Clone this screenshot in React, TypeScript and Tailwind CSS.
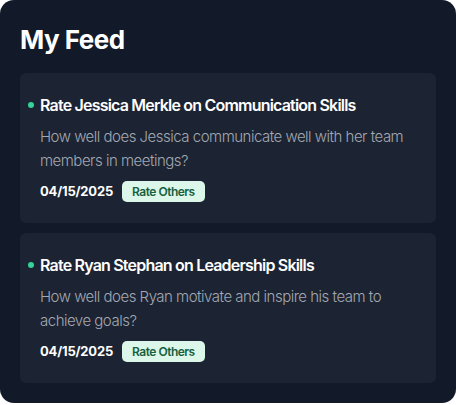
import { FunctionComponent, ReactElement } from "react";

interface FeedItem {
    id: number;
    title: string;
    question: string;
    date: string;
}

const items: FeedItem[] = [
    {
        id: 1,
        title: "Rate Jessica Merkle on Communication Skills",
        question: "How well does Jessica communicate well with her team members in meetings?",
        date: "04/15/2025",
    },
    {
        id: 2,
        title: "Rate Ryan Stephan on Leadership Skills",
        question: "How well does Ryan motivate and inspire his team to achieve goals?",
        date: "04/15/2025",
    },
];

const FeedCard: FunctionComponent<{ item: FeedItem }> = ({ item }): ReactElement => {
    return (
        <div className="bg-[#1c2433] rounded-md pt-5 pb-[21px] pl-5 pr-5">
            {/* Heading */}
            <div className="flex items-center">
                <span className="w-[6px] h-[6px] rounded-full bg-[#34d399] -ml-[12px] mr-[6px] shrink-0" />
                <h3 className="text-[16px] leading-6 font-semibold text-white tracking-[-0.8px]">
                    {item.title}
                </h3>
            </div>

            <p className="mt-2 text-[15px] leading-6 font-light text-[#a3a8b2] tracking-[-0.5px]">
                {item.question}
            </p>

            <div className="mt-2 flex items-center gap-[9px]">
                <span className="text-[13px] font-bold text-white tracking-[-0.2px]">{item.date}</span>
                <span className="h-[21px] px-[10px] flex items-center rounded-[5px] bg-[#dcf7ea] text-[#17603f] text-[12px] font-semibold tracking-[-0.5px]">
                    Rate Others
                </span>
            </div>
        </div>
    );
};

const App: FunctionComponent = (): ReactElement => {
    return (
        <div className="w-[456px] h-[403px] bg-[#121a29] rounded-[14px] pt-6 px-5 pb-5 font-['Inter',sans-serif]">
            <h1 className="text-[26px] leading-8 font-bold text-white mb-[17px] tracking-[-0.5px]">My Feed</h1>

            <div className="flex flex-col gap-[10px]">
                {items.map((item) => (
                    <FeedCard key={item.id} item={item} />
                ))}
            </div>
        </div>
    );
};

export default App;
